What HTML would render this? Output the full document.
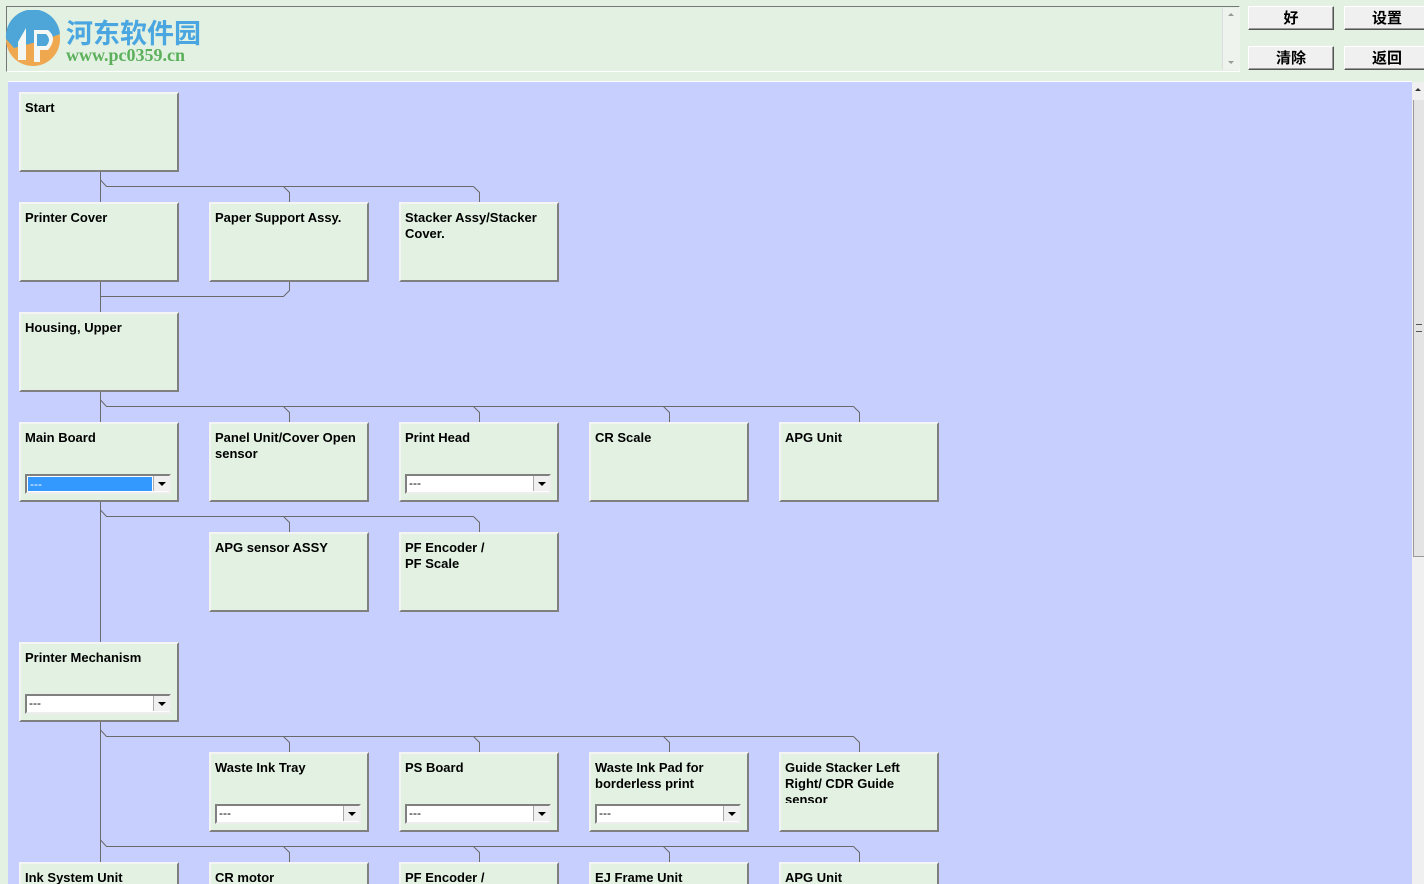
<!DOCTYPE html>
<html><head><meta charset="utf-8"><style>
html,body{margin:0;width:1424px;height:884px;overflow:hidden}
body{background:#e2f1e2;position:relative;font-family:"Liberation Sans",Arial,sans-serif}
#wrap{position:absolute;left:0;top:0;width:1424px;height:884px;overflow:hidden}
.top{position:absolute;left:6px;top:6px;width:1232px;height:64px;border:1px solid #fff;border-top-color:#777;border-left-color:#777;background:#e2f1e2}
.vs{position:absolute;left:1222px;top:8px;width:17px;height:62px;background:#eef3ee;border-left:1px solid #ddd}
.btn{position:absolute;width:84px;height:22px;background:#f0f0f0;border:1px solid #fff;border-right-color:#555;border-bottom-color:#555;box-shadow:inset -1px -1px 0 #999;font:bold 15px "WenQuanYi Zen Hei","Noto Sans CJK SC",sans-serif;text-align:center;line-height:22px;color:#000}
.area{position:absolute;left:8px;top:81px;width:1404px;height:803px;background:#c6cffd;border-top:1px solid #fff}
.sb{position:absolute;left:1412px;top:82px;width:12px;height:802px;background:#f0f0f0}
.box{position:absolute;width:156px;height:76px;background:#e2f1e2;border:2px solid #808080;border-top-color:#f4f4f4;border-left-color:#f4f4f4}
.box.last{height:20px;border-bottom:0;overflow:hidden}
.box .t{position:absolute;left:4px;top:6px;width:152px;height:43px;overflow:hidden;font-weight:bold;font-size:13px;line-height:16px;color:#000}
.box.last .t{height:14px}
.dd{position:absolute;left:4px;top:50px;width:142px;height:16px;border:2px solid #808080;border-right-color:#eee;border-bottom-color:#eee;background:#fff;font-size:12px;line-height:15px}
.dd span{position:absolute;left:2px;top:0}
.dd i{position:absolute;right:0;top:0;width:15px;height:15px;background:#f0f0f0;border-left:1px solid #aaa}
.dd i:after{content:"";position:absolute;left:4px;top:6px;border:4px solid transparent;border-top:4px solid #000;border-bottom:0}
.sel span.b{position:absolute;left:1px;top:1px;right:17px;bottom:1px;background:#3399ff;color:#fff;padding-left:2px;line-height:14px}
</style></head><body><div id="wrap">
<div class="top"></div>
<svg style="position:absolute;left:4px;top:10px" width="60" height="58" viewBox="0 0 60 58">
<circle cx="29" cy="29" r="27" fill="#f0a850"/>
<path d="M2,29 A27,27 0 0 1 56,24 L40,30 L10,38 Z" fill="#4ea6d8"/>
<path d="M14,32 L22,18 L22,50 L14,50 Z" fill="#f4f8f4"/>
<path d="M30,20 L44,20 Q54,28 44,40 L30,40 Z" fill="#f4f8f4"/>
<path d="M33,24 L42,24 Q48,30 42,36 L33,36Z" fill="#4ea6d8"/>
<path d="M30,40 L36,40 L36,52 L30,52Z" fill="#f4f8f4"/>
</svg>
<div style="position:absolute;left:66px;top:12px;font:bold 27px 'WenQuanYi Zen Hei','Noto Sans CJK SC',sans-serif;color:#4aa6e0">河东软件园</div>
<div style="position:absolute;left:66px;top:45px;font:bold 18px 'Liberation Serif',serif;color:#5cb05c">www.pc0359.cn</div>
<div class="vs"><div style="position:absolute;left:5px;top:5px;border:3px solid transparent;border-bottom:3px solid #999;border-top:0"></div><div style="position:absolute;left:5px;bottom:6px;border:3px solid transparent;border-top:3px solid #999;border-bottom:0"></div></div>
<div class="btn" style="left:1248px;top:6px">好</div>
<div class="btn" style="left:1344px;top:6px">设置</div>
<div class="btn" style="left:1248px;top:46px">清除</div>
<div class="btn" style="left:1344px;top:46px">返回</div>
<div class="area"></div>
<div class="sb"><div style="position:absolute;left:3px;top:6px;border:3px solid transparent;border-bottom:3px solid #333;border-top:0"></div><div style="position:absolute;left:1px;top:18px;width:10px;height:456px;background:#e4e4e4;border-left:1px solid #999;border-bottom:1px solid #999"></div><div style="position:absolute;left:4px;top:242px;width:6px;height:6px;border-top:1px solid #555;border-bottom:1px solid #555"></div></div>
<svg style="position:absolute;left:0;top:0" width="1424" height="884"><g stroke="#6a6a6a" stroke-width="1" fill="none">
<path d="M100.5,172V202M100.5,282V312M100.5,392V422M100.5,502V642M100.5,722V884"/>
<path d="M100.5,180L106.5,186.5H473.5M283.5,186.5L289.5,192.5V202M473.5,186.5L479.5,192.5V202"/>
<path d="M100.5,296.5H283.5L289.5,290.5V282"/>
<path d="M100.5,400L106.5,406.5H853.5M283.5,406.5L289.5,412.5V422M473.5,406.5L479.5,412.5V422M663.5,406.5L669.5,412.5V422M853.5,406.5L859.5,412.5V422"/>
<path d="M100.5,510L106.5,516.5H473.5M283.5,516.5L289.5,522.5V532M473.5,516.5L479.5,522.5V532"/>
<path d="M100.5,730L106.5,736.5H853.5M283.5,736.5L289.5,742.5V752M473.5,736.5L479.5,742.5V752M663.5,736.5L669.5,742.5V752M853.5,736.5L859.5,742.5V752"/>
<path d="M100.5,840L106.5,846.5H853.5M283.5,846.5L289.5,852.5V862M473.5,846.5L479.5,852.5V862M663.5,846.5L669.5,852.5V862M853.5,846.5L859.5,852.5V862"/>
</g></svg>
<div class="box" style="left:19px;top:92px"><div class="t">Start</div></div>
<div class="box" style="left:19px;top:202px"><div class="t">Printer Cover</div></div>
<div class="box" style="left:209px;top:202px"><div class="t">Paper Support Assy.</div></div>
<div class="box" style="left:399px;top:202px"><div class="t">Stacker Assy/Stacker Cover.</div></div>
<div class="box" style="left:19px;top:312px"><div class="t">Housing, Upper</div></div>
<div class="box" style="left:19px;top:422px"><div class="t">Main Board</div><div class="dd sel"><span class="b">---</span><i></i></div></div>
<div class="box" style="left:209px;top:422px"><div class="t">Panel Unit/Cover Open sensor</div></div>
<div class="box" style="left:399px;top:422px"><div class="t">Print Head</div><div class="dd"><span>---</span><i></i></div></div>
<div class="box" style="left:589px;top:422px"><div class="t">CR Scale</div></div>
<div class="box" style="left:779px;top:422px"><div class="t">APG Unit</div></div>
<div class="box" style="left:209px;top:532px"><div class="t">APG sensor ASSY</div></div>
<div class="box" style="left:399px;top:532px"><div class="t">PF Encoder /<br>PF Scale</div></div>
<div class="box" style="left:19px;top:642px"><div class="t">Printer Mechanism</div><div class="dd"><span>---</span><i></i></div></div>
<div class="box" style="left:209px;top:752px"><div class="t">Waste Ink Tray</div><div class="dd"><span>---</span><i></i></div></div>
<div class="box" style="left:399px;top:752px"><div class="t">PS Board</div><div class="dd"><span>---</span><i></i></div></div>
<div class="box" style="left:589px;top:752px"><div class="t">Waste Ink Pad for borderless print</div><div class="dd"><span>---</span><i></i></div></div>
<div class="box" style="left:779px;top:752px"><div class="t">Guide Stacker Left Right/ CDR Guide sensor</div></div>
<div class="box last" style="left:19px;top:862px"><div class="t">Ink System Unit</div></div>
<div class="box last" style="left:209px;top:862px"><div class="t">CR motor</div></div>
<div class="box last" style="left:399px;top:862px"><div class="t">PF Encoder /</div></div>
<div class="box last" style="left:589px;top:862px"><div class="t">EJ Frame Unit</div></div>
<div class="box last" style="left:779px;top:862px"><div class="t">APG Unit</div></div>
</div></body></html>
